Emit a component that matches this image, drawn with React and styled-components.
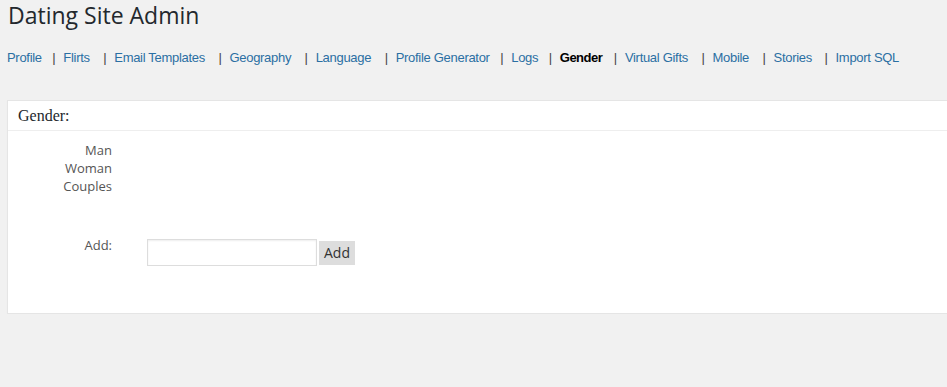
import React from "react";
import styled, { createGlobalStyle } from "styled-components";

const GlobalStyle = createGlobalStyle`
  html, body {
    margin: 0;
    padding: 0;
    background: #f1f1f1;
    overflow: hidden;
  }
  body {
    font-family: "Open Sans", sans-serif;
    color: #444;
  }
`;

const navItems = [
  { label: "Profile", gap: 11 },
  { label: "Flirts", gap: 14 },
  { label: "Email Templates", gap: 14 },
  { label: "Geography", gap: 14 },
  { label: "Language", gap: 14 },
  { label: "Profile Generator", gap: 11 },
  { label: "Logs", gap: 11 },
  { label: "Gender", gap: 12, active: true },
  { label: "Virtual Gifts", gap: 14 },
  { label: "Mobile", gap: 14 },
  { label: "Stories", gap: 13 },
  { label: "Import SQL" },
];

const genders = ["Man", "Woman", "Couples"];

const App = () => {
  return (
    <Page>
      <GlobalStyle />
      <Title>Dating Site Admin</Title>
      <Nav>
        {navItems.map((item, i) => (
          <React.Fragment key={item.label}>
            <NavLink href="#" $active={item.active}>
              {item.label}
            </NavLink>
            {i < navItems.length - 1 && <Sep $gap={item.gap}>|</Sep>}
          </React.Fragment>
        ))}
      </Nav>
      <Panel>
        <PanelHeader>Gender:</PanelHeader>
        <PanelBody>
          <Label>
            {genders.map((g) => (
              <div key={g}>{g}</div>
            ))}
          </Label>
          <div />
          <Label>Add:</Label>
          <AddForm>
            <TextInput type="text" />
            <Button>Add</Button>
          </AddForm>
        </PanelBody>
      </Panel>
    </Page>
  );
};

const Page = styled.div`
  padding: 0 0 0 8px;
`;

const Title = styled.h1`
  margin: 0;
  font-family: "Open Sans", sans-serif;
  font-size: 23px;
  font-weight: 400;
  line-height: 31px;
  color: #23282d;
`;

const Nav = styled.div`
  display: flex;
  align-items: baseline;
  margin: 19px 0 0 -1px;
  font-family: "Liberation Sans", Arial, sans-serif;
  font-size: 13px;
  line-height: 16px;
  letter-spacing: -0.3px;
`;

const NavLink = styled.a`
  color: ${(p) => (p.$active ? "#000" : "#2b6fa3")};
  font-weight: ${(p) => (p.$active ? 700 : 400)};
  letter-spacing: ${(p) => (p.$active ? "-0.5px" : "-0.3px")};
  text-decoration: none;
  white-space: nowrap;
`;

const Sep = styled.span`
  color: #444;
  margin: 0 8px 0 ${(p) => p.$gap - 0.5}px;
`;

const Panel = styled.div`
  margin: 34px -20px 0 -1px;
  background: #fff;
  border: 1px solid #e5e5e5;
  box-shadow: 0 1px 1px rgba(0, 0, 0, 0.04);
`;

const PanelHeader = styled.div`
  height: 29px;
  line-height: 29px;
  padding-left: 10px;
  border-bottom: 1px solid #eee;
  font-family: "Liberation Serif", serif;
  font-size: 16px;
  color: #23282d;
`;

const PanelBody = styled.div`
  display: grid;
  grid-template-columns: 104px 1fr;
  column-gap: 35px;
  row-gap: 41px;
  padding: 10px 0 47px;
  font-size: 13px;
  line-height: 18px;
  color: #555;
`;

const Label = styled.div`
  text-align: right;
`;

const AddForm = styled.div`
  display: flex;
  align-items: center;
  gap: 2px;
  margin-top: 3px;
`;

const TextInput = styled.input`
  box-sizing: border-box;
  width: 170px;
  height: 27px;
  margin: 0;
  border: 1px solid #ddd;
  box-shadow: inset 0 1px 2px rgba(0, 0, 0, 0.07);
  background: #fff;
  outline: none;
`;

const Button = styled.button`
  box-sizing: border-box;
  width: 36px;
  height: 24px;
  padding: 0;
  border: none;
  background: #ddd;
  font-family: "Open Sans", sans-serif;
  font-size: 14px;
  color: #333;
`;

export default App;
